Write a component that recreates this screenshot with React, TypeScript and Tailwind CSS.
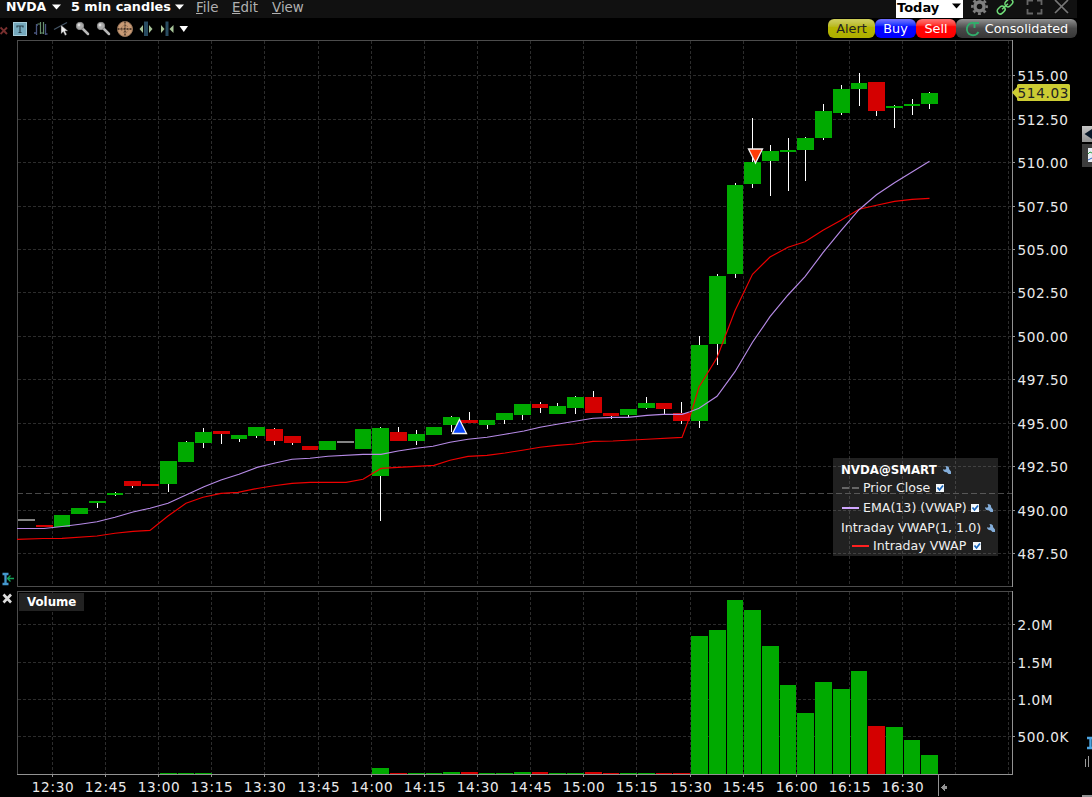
import React from "react";

type Candle = [x: number, w: number, top: number, bottom: number, wickTop: number, wickBottom: number, color: "g" | "r" | "n"];

const GREEN = "#00aa00";
const RED = "#d40000";
const FILL = { g: GREEN, r: RED, n: "#848484" };

const candles: Candle[] = [
  [18, 17, 519, 521, 519, 521, "n"],
  [36, 17, 525, 527, 525, 527, "r"],
  [54, 16, 515, 527, 515, 527, "g"],
  [71, 17, 508, 514, 508, 514, "g"],
  [89, 17, 501, 503, 501, 508, "g"],
  [107, 16, 493, 495, 492, 496, "g"],
  [124, 17, 481, 486, 481, 488, "r"],
  [142, 17, 484, 486, 484, 486, "r"],
  [160, 17, 461, 484, 461, 492, "g"],
  [178, 16, 442, 462, 441, 462, "g"],
  [195, 17, 432, 443, 428, 448, "g"],
  [213, 17, 431, 434, 431, 444, "r"],
  [231, 16, 435, 439, 435, 442, "g"],
  [248, 17, 427, 436, 427, 438, "g"],
  [266, 17, 429, 441, 428, 445, "r"],
  [284, 17, 436, 443, 436, 445, "r"],
  [302, 16, 446, 450, 446, 450, "r"],
  [319, 17, 441, 450, 441, 450, "g"],
  [337, 17, 441, 443, 441, 443, "n"],
  [355, 16, 429, 449, 429, 449, "g"],
  [372, 17, 428, 476, 427, 521, "g"],
  [390, 17, 432, 441, 427, 441, "r"],
  [408, 17, 434, 441, 430, 445, "g"],
  [426, 16, 427, 435, 427, 435, "g"],
  [443, 17, 417, 425, 416, 432, "g"],
  [461, 17, 420, 423, 412, 423, "r"],
  [479, 16, 420, 425, 420, 429, "g"],
  [496, 17, 413, 420, 413, 424, "g"],
  [514, 17, 404, 415, 404, 420, "g"],
  [532, 16, 404, 408, 402, 413, "r"],
  [549, 17, 406, 414, 403, 414, "g"],
  [567, 17, 397, 408, 396, 414, "g"],
  [585, 17, 397, 413, 391, 413, "r"],
  [603, 16, 413, 416, 413, 419, "r"],
  [620, 17, 409, 415, 409, 417, "g"],
  [638, 17, 403, 408, 397, 409, "g"],
  [656, 16, 403, 409, 403, 414, "r"],
  [673, 17, 413, 421, 402, 424, "r"],
  [691, 17, 345, 421, 336, 428, "g"],
  [709, 17, 276, 344, 274, 365, "g"],
  [727, 16, 185, 274, 183, 278, "g"],
  [744, 17, 162, 184, 118, 188, "g"],
  [762, 17, 151, 161, 145, 196, "g"],
  [780, 16, 150, 152, 138, 191, "g"],
  [797, 17, 138, 150, 137, 181, "g"],
  [815, 17, 111, 138, 104, 140, "g"],
  [833, 17, 89, 113, 85, 115, "g"],
  [851, 16, 83, 89, 73, 106, "g"],
  [868, 17, 82, 111, 82, 116, "r"],
  [886, 17, 106, 108, 105, 128, "g"],
  [904, 16, 104, 106, 99, 115, "g"],
  [921, 17, 93, 104, 92, 109, "g"],
];

// Top edge of each volume bar, keyed by candle index.
const volumeTops: Record<number, number> = {
  8: 773, 9: 773, 10: 773,
  20: 768, 21: 773, 22: 773, 23: 773, 24: 772, 25: 772, 26: 773, 27: 773, 28: 772, 29: 772,
  30: 773, 31: 773, 32: 772, 33: 773, 34: 773, 35: 773, 36: 773, 37: 773,
  38: 636, 39: 630, 40: 600, 41: 610, 42: 646, 43: 685, 44: 713, 45: 682, 46: 689, 47: 671,
  48: 726, 49: 727, 50: 740, 51: 755,
};

const ema =
  "17,528.5 44,528.5 62,526.5 80,524.2 97,521.7 115,517.3 133,512 150,508.2 168,503.2 186,495 204,486.7 221,480 239,474.3 257,467.4 274,463.3 292,459.3 310,458.3 328,456.3 363,454.4 381,454.4 398,451 416,448.3 433,446.3 450,442.3 468,439.3 487,437.3 505,434.3 524,431 540,427.3 557,424.3 575,421.3 593,418.3 613,417.4 628,417.4 647,415.4 663,414.4 682,414.4 690,411.7 699,408.3 717,396.3 735,371.7 752.5,342.3 770,316.7 788,295 805,276.7 823,252.7 841,230.7 859,209.7 876.5,194.7 894.5,182.7 912,172 929.5,161.3";
const vwap =
  "17,539.4 43,538.5 62,538.4 97,536 115,533.3 133,531.4 150,530.4 168,516 186,503.3 203,497.3 221,493.4 238,492.4 257,488.5 274,485.7 292,483.4 310,482.4 346,482.4 363,479.3 381,468.4 398,467.4 434,465.4 450,460.3 468,456.4 487,455.4 505,453 524,450 540,447.3 557,445.4 575,444 593,441.4 613,441 647,439.2 682,437.4 691,413.3 699,387 717,357.7 735,310.7 752.5,274.3 770,257 788,247.3 805,241.7 823,230.3 841,220.3 859,209.3 876.5,205.3 894.5,201.4 912,199.4 929.5,198.4";

const gridX = [52, 105, 158, 211, 264, 318, 371, 424, 477, 530, 583, 636, 690, 743, 796, 849, 902, 955, 1008];
const times = ["12:30", "12:45", "13:00", "13:15", "13:30", "13:45", "14:00", "14:15", "14:30", "14:45", "15:00", "15:15", "15:30", "15:45", "16:00", "16:15", "16:30"];
const prices: [number, string][] = [
  [75, "515.00"], [119, "512.50"], [162, "510.00"], [206, "507.50"], [249, "505.00"], [292, "502.50"],
  [336, "500.00"], [379, "497.50"], [423, "495.00"], [466, "492.50"], [510, "490.00"], [553, "487.50"],
];
const volumes: [number, string][] = [[624, "2.0M"], [662, "1.5M"], [699, "1.0M"], [736, "500.0K"]];

const GRID = { stroke: "#2c2c2c", strokeWidth: 1, strokeDasharray: "3 2" };

function PriceChart() {
  return (
    <svg width="1065" height="549" viewBox="17 40 1065 549" className="block" shapeRendering="crispEdges">
      {gridX.map((x) => <line key={x} x1={x + 0.5} x2={x + 0.5} y1="41" y2="586" {...GRID} />)}
      {prices.map(([y]) => <line key={y} x1="18" x2="1012" y1={y + 0.5} y2={y + 0.5} {...GRID} />)}
      <line x1="17" x2="1012" y1="493.5" y2="493.5" stroke="#484848" strokeDasharray="6 3" />
      <path d="M17 40.5H1012M17.5 40V587M17 586.5H1012" stroke="#4c4c4c" fill="none" />
      <path d="M1012.5 40V587" stroke="#929292" />
      {prices.map(([y]) => <rect key={y} x="1013" y={y} width="2" height="1" fill="#929292" />)}
      {candles.map(([x, w, top, bottom, wt, wb, c]) => (
        <g key={x}>
          <rect x={x + 8} y={wt} width="1" height={wb - wt} fill="#fff" />
          <rect x={x} y={top} width={w} height={bottom - top} fill={FILL[c]} />
        </g>
      ))}
      <g shapeRendering="geometricPrecision" fill="none" strokeWidth="1.15">
        <polyline points={vwap} stroke="#ee0000" />
        <polyline points={ema} stroke="#b68ae6" />
        <path d="M459.5 419.5 L466.5 433.5 H452.5 Z" fill="#0b48ff" stroke="#f4f4f4" strokeWidth="1.3" />
        <path d="M748.5 149 H762.5 L755.5 163 Z" fill="#ff3b08" stroke="#f4f4f4" strokeWidth="1.3" />
        <path d="M1012 92.5 L1017 87 V85.5 Q1017 84 1018.5 84 H1068.5 Q1070 84 1070 85.5 V99.5 Q1070 101 1068.5 101 H1018.5 Q1017 101 1017 99.5 V98 Z" fill="#cccc33" />
      </g>
      <g fontFamily="DejaVu Sans" fontSize="13.6" fill="#eaeaea">
        {prices.map(([y, t]) => <text key={t} x="1017.5" y={y + 6} textLength="50.5">{t}</text>)}
        <text x="1017.5" y="98" textLength="51" fill="#222">514.03</text>
      </g>
    </svg>
  );
}

function VolumeChart() {
  return (
    <svg width="1065" height="208" viewBox="17 589 1065 208" className="block" shapeRendering="crispEdges">
      {gridX.map((x) => <line key={x} x1={x + 0.5} x2={x + 0.5} y1="592" y2="774" {...GRID} />)}
      {volumes.map(([y]) => <line key={y} x1="18" x2="1012" y1={y + 0.5} y2={y + 0.5} {...GRID} />)}
      <path d="M17 591.5H1012M17.5 591V774" stroke="#4c4c4c" fill="none" />
      <path d="M17 774.5H1013M1012.5 591V775M938.5 775V796" stroke="#929292" fill="none" />
      {candles.map(([x, w, , , , , c], i) =>
        volumeTops[i] ? <rect key={x} x={x} y={volumeTops[i]} width={w} height={774 - volumeTops[i]} fill={FILL[c]} /> : null
      )}
      {volumes.map(([y]) => <rect key={y} x="1013" y={y} width="2" height="1" fill="#929292" />)}
      {gridX.slice(0, 17).map((x) => <rect key={x} x={x} y="775" width="1" height="2" fill="#929292" />)}
      <path d="M941 787.5 L945 783.5 V786 H947 V789 H945 V791.5 Z" fill="#929292" />
      <g fontFamily="DejaVu Sans" fontSize="13.6" fill="#eaeaea">
        {times.map((t, i) => <text key={t} x={gridX[i] - 20.3} y="792" textLength="42">{t}</text>)}
        {volumes.map(([y, t]) => <text key={t} x="1017.5" y={y + 6} textLength={t.length > 4 ? 51 : 35}>{t}</text>)}
      </g>
    </svg>
  );
}

function Caret({ className = "" }: { className?: string }) {
  return (
    <svg width="9" height="6" viewBox="0 0 9 6" className={className}>
      <path d="M0 0.5H9L4.5 5.5Z" fill="currentColor" />
    </svg>
  );
}

function MenuBar() {
  return (
    <header className="flex h-[18px] w-[1077px] overflow-hidden bg-[#111] text-[13.4px] leading-[15px] text-[#b0b0b0]">
      <div className="flex w-[66px] pl-[6px] text-[12.5px] font-bold leading-[14px] text-white">
        <span className="w-[46px]">NVDA</span><Caret className="mt-[4px]" />
      </div>
      <div className="flex w-[130px] pl-[5px] text-[12.8px] font-bold leading-[14px] text-white">
        <span className="w-[104px]">5 min candles</span><Caret className="mt-[4px]" />
      </div>
      <span className="w-[36px]"><u>F</u>ile</span>
      <span className="w-[40px]"><u>E</u>dit</span>
      <span><u>V</u>iew</span>
      <div className="ml-auto flex">
        <div className="flex h-[18px] w-[67px] bg-white pl-px text-[13px] font-bold leading-[15px] text-black">
          <span className="w-[55px]">Today</span><Caret className="mt-[3px]" />
        </div>
        <svg width="114" height="18" viewBox="963 0 114 18" fill="none">
          <g stroke="#808080">
            <circle cx="979.5" cy="6.5" r="4.5" strokeWidth="3.4" />
            <circle cx="979.5" cy="6.5" r="7.2" strokeWidth="2.4" strokeDasharray="2.9 2.755" strokeDashoffset="1.45" />
            <path d="M1027.5 5V.5H1033M1037 .5H1041.5V5M1041.5 9V13.5H1037M1033 13.5H1027.5V9" stroke="#666" strokeWidth="1.8" />
            <path d="M1055 0L1068 13M1068 0L1055 13" stroke="#777" strokeWidth="1.7" />
          </g>
          <g stroke="#6fdc78" strokeWidth="1.5" transform="rotate(-43 1005 6.5)">
            <rect x="995.5" y="3.5" width="8.5" height="6" rx="3" />
            <rect x="1006" y="3.5" width="8.5" height="6" rx="3" />
            <path d="M1001 6.5H1009" />
          </g>
        </svg>
      </div>
    </header>
  );
}

function ToolIcons() {
  return (
    <svg width="190" height="22" viewBox="0 18 190 22" fill="none">
      <path d="M.5 27.5L7 34M7 27.5L.5 34" stroke="#79302f" strokeWidth="1.9" />
      <rect x="13.5" y="22.5" width="13" height="13" fill="#75a9bd" stroke="#a6cbd8" />
      <path d="M17 27.5V26H23V27.5M20 26V32.5M18.5 32.500H21.5" stroke="#29414d" strokeWidth="1.2" />
      <path d="M34 33H36.5M36.500 24V35M36.500 25H38M45.500 24V35M45.500 34H47.500" stroke="#49557f" strokeWidth="1.3" />
      <path d="M37.500 24H40.500V33H43M43.500 22V34M40.500 22V34" stroke="#67906e" strokeWidth="1.2" />
      <path d="M54 29.500L67 22.500" stroke="#435465" strokeWidth="1.3" />
      <path d="M61 25V34L63.300 31.700L65 35.500L66.800 34.500L65 31H68Z" fill="#ededed" stroke="#333" strokeWidth=".5" />
      {[80, 101].map((x) => (
        <g key={x}>
          <path d={`M${x + 3} 29L${x + 8} 34`} stroke="#b8b8b8" strokeWidth="2.5" strokeLinecap="round" />
          <circle cx={x} cy="26" r="3.7" fill="#acacac" stroke="#858585" />
          <circle cx={x - 1} cy="25" r="1.4" fill="#e0e0e0" />
        </g>
      ))}
      <circle cx="125" cy="29" r="7.5" fill="#c99a74" stroke="#98765b" />
      <path d="M117.500 29H132.500M125 21.500V36.500" stroke="#33251c" strokeWidth="1.3" strokeDasharray="2 1" />
      <circle cx="125" cy="29" r="3.6" stroke="#8c6a50" strokeDasharray="1.5 1.5" />
      <rect x="144" y="21.5" width="4" height="14.5" fill="#294c61" />
      <path d="M143 25V33L139.500 29ZM149 25V33L152.500 29Z" fill="#a9c69a" />
      <rect x="165.5" y="21.5" width="3" height="14.5" fill="#294c61" />
      <path d="M161 25V33L164.500 29ZM173.500 25V33L169.500 29Z" fill="#a9c69a" />
      <path d="M179.500 26H188L183.800 32Z" fill="#fff" />
    </svg>
  );
}

function ToolBar() {
  const pill = "flex h-[19px] items-center justify-center rounded-[6px] text-[12.8px] leading-[19px] ";
  return (
    <div className="flex h-[22px] w-[1077px] justify-between">
      <ToolIcons />
      <div className="mt-px flex">
        <button className={pill + "w-[47px] bg-linear-to-b from-[#cbcb55] from-10% via-[#b6b600] via-45% to-[#aeae00] text-[#222]"}>Alert</button>
        <button className={pill + "w-[41px] bg-linear-to-b from-[#6b6bff] from-5% via-[#0505ff] via-40% to-[#0000ff] text-white"}>Buy</button>
        <button className={pill + "w-[40px] bg-linear-to-b from-[#ff6b6b] from-5% via-[#ff0505] via-40% to-[#ff0000] text-white"}>Sell</button>
        <button className={pill + "w-[121px] gap-[5px] bg-linear-to-b from-[#929292] via-[#494949] via-50% to-[#373737] text-white"}>
          <svg width="15" height="16" viewBox="0 0 15 16" fill="none" stroke="#31ad6b" strokeWidth="1.9">
            <path d="M13.500 11A6.200 6.200 0 1 1 8 1.800" /><path d="M8 2H14M9.500 2V7" />
          </svg>
          <span>Consolidated</span>
        </button>
      </div>
    </div>
  );
}

function Check() {
  return (
    <svg width="8" height="8" viewBox="0 0 8 8" className="shrink-0">
      <rect width="8" height="8" fill="#f3f7fa" />
      <path d="M1.500 3.500L3.500 6L7 1.500" stroke="#1765bd" strokeWidth="1.7" fill="none" />
    </svg>
  );
}

function Wrench() {
  return (
    <svg width="8" height="8" viewBox="0 0 8 8" className="shrink-0">
      <path d="M2.500 0C5.500 0 6.500 1.500 6 3L8 5.500V8H5.500L3.800 6.300C1.500 6.600 0 5 0 3.300L2.200 3.800L3.300 2.400Z" fill="#84aeda" />
    </svg>
  );
}

function Legend() {
  return (
    <div className="absolute left-[816px] top-[418px] h-[98px] w-[165px] bg-[#848484]/25 text-[12.6px] leading-[18px] text-[#efefef]">
      <div className="flex h-[20px] items-center pl-[8px] pt-[3px]"><b className="w-[102px] text-[11.8px] text-white">NVDA@SMART</b><Wrench /></div>
      <div className="flex h-[19px] items-center pl-[9px]">
        <i className="mr-[4px] flex w-[17px] gap-[3px]"><i className="h-[2px] w-[7px] bg-[#666]" /><i className="h-[2px] w-[7px] bg-[#666]" /></i>
        <span className="w-[73px]">Prior Close</span><Check />
      </div>
      <div className="flex h-[21px] items-center pl-[9px]">
        <i className="mr-[4px] h-[2px] w-[17px] bg-[#cfa6ff]" /><span className="w-[108px] whitespace-nowrap">EMA(13) (VWAP)</span><Check />
        <span className="w-[6px]" /><Wrench />
      </div>
      <div className="flex h-[19px] items-center pl-[8px]"><span className="w-[146px] whitespace-nowrap text-[12.7px]">Intraday VWAP(1, 1.0)</span><Wrench /></div>
      <div className="flex h-[17px] items-center pl-[19px]"><i className="mr-[4px] h-[2px] w-[17px] bg-[#ff2020]" /><span className="w-[100px] whitespace-nowrap">Intraday VWAP</span><Check /></div>
    </div>
  );
}

function LeftGutter() {
  return (
    <svg width="17" height="757" viewBox="0 40 17 757" className="shrink-0">
      <path d="M2.500 574H8.500M5.500 573V584.500M2.500 584H8.500" stroke="#4598ce" strokeWidth="2.300" />
      <path d="M7 578.500H14M10.500 575.500L7.500 578.500L10.500 581.500" stroke="#13a357" strokeWidth="1.300" fill="none" />
      <path d="M3.500 594.500L11 602.500M11 594.500L3.500 602.500" stroke="#ddd" strokeWidth="2.600" />
    </svg>
  );
}

function RightStrip() {
  return (
    <svg width="10" height="757" viewBox="1082 40 10 757" className="shrink-0">
      <defs>
        <linearGradient id="tab" x1="0" x2="0" y1="0" y2="1"><stop stopColor="#c5c5c5" /><stop offset="1" stopColor="#929292" /></linearGradient>
      </defs>
      <rect x="1082" y="126" width="10" height="16" fill="url(#tab)" />
      <path d="M1084.500 134L1092 129V139Z" fill="#071728" />
      <rect x="1082" y="144" width="10" height="23" fill="#3d3d3d" />
      <rect x="1088" y="148" width="4" height="14" fill="#e7edf4" />
      <path d="M1088 154L1090 152L1092 153" stroke="#2c9b3c" fill="none" /><path d="M1088 160L1092 158" stroke="#3268c8" />
      <path d="M1087 738H1092M1090.500 738V748M1087 748H1092" stroke="#4ba3df" strokeWidth="2.400" />
      <path d="M1085.500 759V767M1088.500 756V767" stroke="#999" />
      <rect x="1082" y="795" width="10" height="2" fill="#929292" />
    </svg>
  );
}

export default function App() {
  return (
    <div className="flex h-[797px] w-[1092px] flex-col overflow-hidden bg-black font-['DejaVu_Sans',sans-serif]">
      <MenuBar />
      <ToolBar />
      <main className="flex h-[757px]">
        <LeftGutter />
        <div className="flex w-[1065px] flex-col">
          <section className="relative h-[549px]"><PriceChart /><Legend /></section>
          <section className="relative h-[208px]">
            <VolumeChart />
            <div className="absolute left-[2px] top-[4px] flex h-[18px] w-[65px] items-center bg-[#222] pl-[8px] pt-[2px] text-[11.8px] font-bold text-white">Volume</div>
          </section>
        </div>
        <RightStrip />
      </main>
    </div>
  );
}
